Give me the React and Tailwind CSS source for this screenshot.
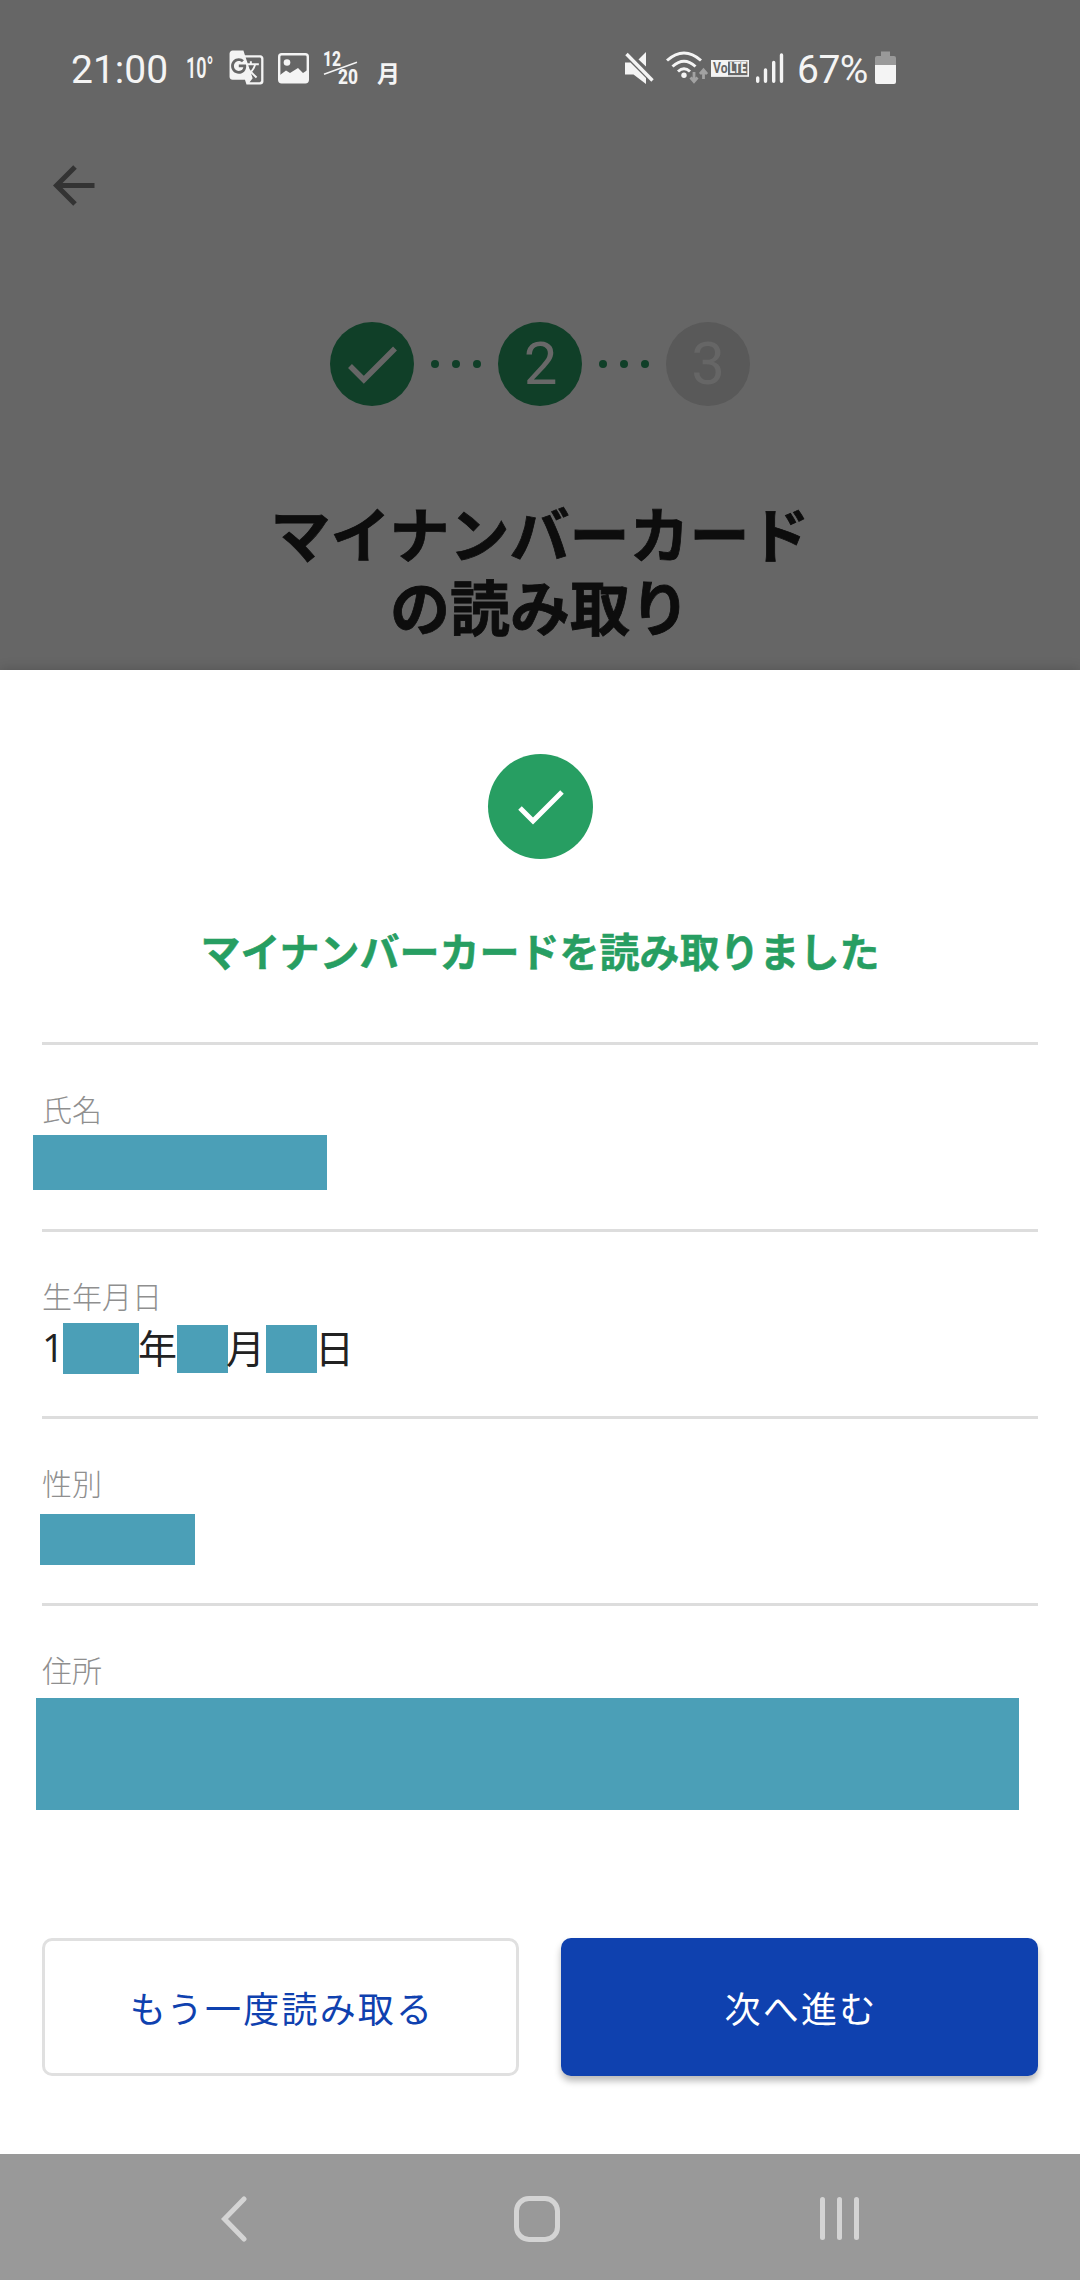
import { MdGTranslate } from "react-icons/md";

function StatusBar() {
  return (
    <div className="flex h-[34px] items-start text-[#f4f4f4] font-['Roboto',sans-serif]">
      <span className="ml-[71px] w-[99px] mt-[4px] text-[39px] leading-[30px] whitespace-nowrap">21:00</span>
      <span className="ml-[16px] mt-[6px] w-[27px] text-[30px] leading-[22px] font-semibold whitespace-nowrap">
        <span className="inline-block origin-left scale-x-[0.6]">10°</span>
      </span>
      <MdGTranslate className="ml-[15px] -mt-[2px] h-[37px] w-[37px] shrink-0" />
      <svg className="ml-[13px] mt-[2px] shrink-0" width="31" height="31" viewBox="0 0 31 31">
        <rect x="1.2" y="1.2" width="28.6" height="28" rx="2.5" fill="none" stroke="currentColor" strokeWidth="2.4" />
        <circle cx="9" cy="9.5" r="3.3" fill="currentColor" />
        <path d="M2 22L8 17.5L12 20L20 15L25 20L29.5 17V29H2Z" fill="currentColor" />
      </svg>
      <svg className="ml-[14px] shrink-0 overflow-visible" width="36" height="36" viewBox="0 0 36 36">
        <text x="0" y="14.5" fontSize="20" fontWeight="800" fill="currentColor" textLength="18" lengthAdjust="spacingAndGlyphs">12</text>
        <text x="15" y="33" fontSize="20" fontWeight="800" fill="currentColor" textLength="20" lengthAdjust="spacingAndGlyphs">20</text>
        <path d="M1 23.3L34 11.3" stroke="currentColor" strokeWidth="1.6" />
      </svg>
      <span className="ml-[18px] mt-[9px] w-[23px] text-[23px] leading-[24px] font-bold font-['Noto_Sans_CJK_JP',sans-serif]">月</span>

      {/* mute */}
      <svg className="ml-[225px] shrink-0" width="29" height="34" viewBox="0 0 29 34">
        <path d="M0 11.5H5.5L21 27V33L8.5 23.5H0Z" fill="currentColor" />
        <path d="M21 1V15.5L13.5 8.5Z" fill="currentColor" />
        <path d="M1.5 3L27.5 29.5" stroke="currentColor" strokeWidth="3.4" />
      </svg>
      {/* wifi with traffic arrows */}
      <svg className="ml-[12px] shrink-0" width="42" height="34" viewBox="0 0 42 34">
        <g fill="none" stroke="currentColor" strokeWidth="3">
          <path d="M1 9.5Q18 -5.5 35 9.5" />
          <path d="M6.5 15.5Q18 5 29.5 15.5" />
          <path d="M12 20.5Q18 15 24 20.5" />
        </g>
        <circle cx="18" cy="24.3" r="2.7" fill="currentColor" />
        <g fill="none" stroke="#a2a2a2" strokeWidth="2.8">
          <path d="M28 21V30M24.5 26.5L28 30.5L31.5 26.5" />
          <path d="M37.5 28V19.5M34 23L37.5 19L41 23" />
        </g>
      </svg>
      <svg className="ml-[3px] mt-[9px] shrink-0 overflow-visible" width="38" height="17" viewBox="0 0 38 17">
        <rect x="0.8" y="0.8" width="36.4" height="15.2" fill="none" stroke="currentColor" strokeWidth="1.6" />
        <rect x="0" y="0" width="17" height="16.5" fill="currentColor" />
        <text x="2" y="13.3" fontSize="14" fontWeight="700" fill="#666" textLength="14.5" lengthAdjust="spacingAndGlyphs">Vo</text>
        <text x="18.5" y="13.3" fontSize="14" fontWeight="700" fill="currentColor" textLength="17" lengthAdjust="spacingAndGlyphs">LTE</text>
      </svg>
      <svg className="ml-[7px] mt-[2px] shrink-0" width="28" height="30" viewBox="0 0 28 30">
        <path
          d="M1.7 25V28.3M9.5 17V28.3M17.7 9.5V28.3M25.5 2V28.3"
          stroke="currentColor"
          strokeWidth="3.4"
          strokeLinecap="round"
        />
      </svg>
      <span className="ml-[13px] mt-[4px] w-[73px] text-[39px] leading-[30px] tracking-[-0.5px] whitespace-nowrap">67%</span>
      <svg className="ml-[5px] shrink-0" width="21" height="34" viewBox="0 0 21 34">
        <path d="M6 0.5H15V5H19A2 2 0 0 1 21 7V15H0V7A2 2 0 0 1 2 5H6Z" fill="#999" />
        <path d="M0 14H21V31A2 2 0 0 1 19 33H2A2 2 0 0 1 0 31Z" fill="currentColor" />
      </svg>
    </div>
  );
}

function Dots() {
  return (
    <div className="flex w-[84px] items-center justify-center gap-[12.5px]">
      <span className="h-[8.5px] w-[8.5px] rounded-full bg-[#103f28]" />
      <span className="h-[8.5px] w-[8.5px] rounded-full bg-[#103f28]" />
      <span className="h-[8.5px] w-[8.5px] rounded-full bg-[#103f28]" />
    </div>
  );
}

function Stepper() {
  return (
    <div className="flex justify-center font-['Roboto',sans-serif] text-[60px] leading-[84px] text-center">
      <div className="h-[84px] w-[84px] rounded-full bg-[#103f28]">
        <svg width="84" height="84" viewBox="0 0 84 84" fill="none" stroke="#666" strokeWidth="5.5">
          <path d="M20 44L33.8 57.8L65 26.5" />
        </svg>
      </div>
      <Dots />
      <div className="h-[84px] w-[84px] rounded-full bg-[#103f28] pl-px text-[#686868]">2</div>
      <Dots />
      <div className="h-[84px] w-[84px] rounded-full bg-[#595959] text-[#666]">3</div>
    </div>
  );
}

function Field({ label, children }) {
  return (
    <div className="h-[187px] border-t-[3px] border-[#ddd] pt-[45px]">
      <p className="pb-[3px] text-[30px] leading-[36px] font-light text-[#8f8f8f]">{label}</p>
      {children}
    </div>
  );
}

function App() {
  return (
    <div className="flex h-[2280px] w-[1080px] flex-col overflow-hidden bg-[#666] font-['Noto_Sans_CJK_JP',sans-serif]">
      <header className="h-[670px] shrink-0 pt-[51px]">
        <StatusBar />
        <svg className="ml-[53px] mt-[80px]" width="42" height="42" viewBox="0 0 42 42" fill="none" stroke="#333" strokeWidth="5">
          <path d="M41.5 20.5H4M22 2L3.5 20.5L22 39" />
        </svg>
        <div className="mt-[115px]">
          <Stepper />
        </div>
        <h1 className="mt-[89px] text-center text-[60px] leading-[73px] font-bold text-[#0d0d0d] [-webkit-text-stroke:0.8px_#0d0d0d]">
          マイナンバーカード
          <br />
          の読み取り
        </h1>
      </header>

      <main className="h-[1484px] shrink-0 bg-white px-[42px] pt-[84px] shadow-[0_0_12px_rgba(0,0,0,0.2)]">
        <div className="mx-auto h-[105px] w-[105px] rounded-full bg-[#279e62]">
          <svg width="105" height="105" viewBox="0 0 105 105" fill="none" stroke="#fff" strokeWidth="5">
            <path d="M32 54L45 67L74 38" />
          </svg>
        </div>
        <p className="mt-[61px] h-[122px] text-center text-[40px] leading-[60px] font-bold text-[#279e62] whitespace-nowrap [-webkit-text-stroke:0.5px_#279e62]">
          マイナンバーカードを読み取りました
        </p>

        <Field label="氏名">
          <div className="-ml-[9px] mt-[6px] h-[55px] w-[294px] bg-[#4b9fb7]" />
        </Field>
        <Field label="生年月日">
          <div className="mt-[4px] flex h-[57px] items-center text-[39px] leading-[51px] text-[#222]">
            <span className="w-[21px] -mt-[5px] font-['Open_Sans',sans-serif]">1</span>
            <span className="h-[51px] w-[76px] bg-[#4b9fb7]" />
            <span className="-mt-[5px] w-[38px] -indent-[1px]">年</span>
            <span className="h-[48px] w-[51px] bg-[#4b9fb7]" />
            <span className="-mt-[5px] w-[38px] -indent-[2px]">月</span>
            <span className="h-[48px] w-[51px] bg-[#4b9fb7]" />
            <span className="-mt-[5px] -indent-[2px]">日</span>
          </div>
        </Field>
        <Field label="性別">
          <div className="-ml-[2px] mt-[11px] h-[51px] w-[155px] bg-[#4b9fb7]" />
        </Field>
        <Field label="住所">
          <div className="-ml-[6px] mt-[8px] h-[112px] w-[983px] bg-[#4b9fb7]" />
        </Field>

        <div className="mt-[148px] grid grid-cols-2 gap-[42px] text-[36px] tracking-[2.2px]">
          <button className="h-[138px] rounded-[10px] border-[3px] border-[#e0e0e0] pl-[3px] text-[#0f41af]">もう一度読み取る</button>
          <button className="h-[138px] rounded-[10px] bg-[#0f41af] pl-[3px] text-white shadow-[0_5px_7px_rgba(0,0,0,0.28)]">次へ進む</button>
        </div>
      </main>

      <nav className="flex h-[126px] shrink-0 items-center bg-[#999] text-[#d4d4d4]">
        <svg className="ml-[220px] mt-[1px]" width="28" height="48" viewBox="0 0 28 48" fill="none" stroke="currentColor" strokeWidth="5" strokeLinecap="round">
          <path d="M24 5L4.5 25L24 45" />
        </svg>
        <div className="ml-[266px] mt-[3px] h-[46px] w-[46px] rounded-[15px] border-[5px] border-[#d4d4d4]" />
        <div className="ml-[260px] mt-[3px] flex gap-[12px]">
          <span className="h-[43px] w-[5px] rounded-full bg-[#d4d4d4]" />
          <span className="h-[43px] w-[5px] rounded-full bg-[#d4d4d4]" />
          <span className="h-[43px] w-[5px] rounded-full bg-[#d4d4d4]" />
        </div>
      </nav>
    </div>
  );
}

export default App;
